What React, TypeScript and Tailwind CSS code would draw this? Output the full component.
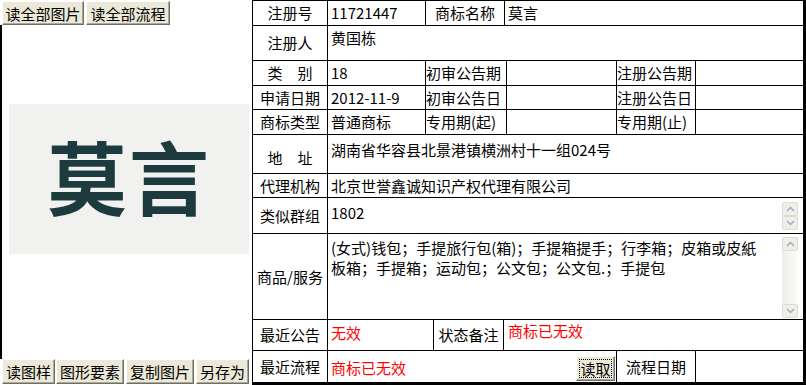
import React from 'react';

const FONT = "font-['Noto_Sans_CJK_SC',sans-serif]";

function Btn({ children, w, className = '' }: { children: React.ReactNode; w: string; className?: string }) {
  return (
    <button
      className={`${w} h-full shrink-0 bg-[#ece9d8] border border-t-white border-l-white border-r-[#716f64] border-b-[#716f64] shadow-[inset_-1px_-1px_0_#aca899] text-[15px] leading-none text-black ${className}`}
    >
      {children}
    </button>
  );
}

function Chevron({ up }: { up?: boolean }) {
  return (
    <svg width="9" height="6" viewBox="0 0 9 6" fill="none">
      <path d={up ? 'M1 5l3.5-3.5L8 5' : 'M1 1l3.5 3.5L8 1'} stroke="#a3abbc" strokeWidth="1.5" />
    </svg>
  );
}

function ScrollBar({ track }: { track?: boolean }) {
  return (
    <div className="w-[16px] h-full flex flex-col shrink-0">
      <div className="h-[14px] flex items-center justify-center bg-[#efeee9] border border-[#dddbd2] rounded-[2px]">
        <Chevron up />
      </div>
      <div className={track ? 'flex-1 bg-linear-to-r from-[#eeede6] to-[#fcfcf9]' : 'h-0'} />
      <div className="h-[14px] flex items-center justify-center bg-[#efeee9] border border-[#dddbd2] rounded-[2px]">
        <Chevron />
      </div>
    </div>
  );
}

const row = 'flex border-b border-black';
const label = 'shrink-0 w-[75px] border-r border-black flex items-center justify-center';
const cell = 'shrink-0 border-r border-black flex items-center pl-[3px]';

export default function App() {
  return (
    <div className={`w-[806px] h-[385px] flex bg-white text-[15px] leading-[16px] text-black ${FONT}`}>
      {/* left: picture panel */}
      <div className="w-[252px] h-full flex flex-col shrink-0">
        <div className="h-[25px] flex pl-[2px] pt-[1px] gap-[2px]">
          <Btn w="w-[82px]">读全部图片</Btn>
          <Btn w="w-[84px]">读全部流程</Btn>
        </div>
        <div className="flex-1 border-l-2 border-black flex flex-col justify-center pl-[7px] pr-[3px] pb-[27px]">
          <div className="h-[150px] bg-[#f1f1ef] flex items-center justify-center pb-[10px]">
            <span className="text-[80px] leading-none font-bold text-[#1d3b3f] tracking-[2px]">莫言</span>
          </div>
        </div>
        <div className="h-[26px] flex pl-[2px] pb-[1px]">
          <Btn w="w-[53px]">读图样</Btn>
          <Btn w="w-[68px]" className="ml-px">图形要素</Btn>
          <Btn w="w-[68px]" className="ml-[2px]">复制图片</Btn>
          <Btn w="w-[53px]" className="ml-[2px]">另存为</Btn>
        </div>
      </div>

      {/* right: detail table */}
      <div className="w-[554px] h-full flex flex-col border-l border-t border-black border-r-[3px] border-b-[3px]">
        <div className={`${row} h-[25px]`}>
          <div className={label}>注册号</div>
          <div className={`${cell} w-[98px]`}>11721447</div>
          <div className={`${label} !w-[79px]`}>商标名称</div>
          <div className="flex-1 flex items-center pl-[3px]">莫言</div>
        </div>
        <div className={`${row} h-[35px]`}>
          <div className={label}>注册人</div>
          <div className="flex-1 pl-[3px] pt-[4px]">黄国栋</div>
        </div>
        <div className={`${row} h-[25px]`}>
          <div className={label}>类　别</div>
          <div className={`${cell} w-[98px]`}>18</div>
          <div className={`${cell} w-[81px] !pl-0`}>初审公告期</div>
          <div className={`${cell} w-[110px]`} />
          <div className={`${cell} w-[79px] !pl-0`}>注册公告期</div>
          <div className="flex-1" />
        </div>
        <div className={`${row} h-[24px]`}>
          <div className={label}>申请日期</div>
          <div className={`${cell} w-[98px]`}>2012-11-9</div>
          <div className={`${cell} w-[81px] !pl-0`}>初审公告日</div>
          <div className={`${cell} w-[110px]`} />
          <div className={`${cell} w-[79px] !pl-0`}>注册公告日</div>
          <div className="flex-1" />
        </div>
        <div className={`${row} h-[25px]`}>
          <div className={label}>商标类型</div>
          <div className={`${cell} w-[98px]`}>普通商标</div>
          <div className={`${cell} w-[81px] !pl-0`}>专用期(起)</div>
          <div className={`${cell} w-[110px]`} />
          <div className={`${cell} w-[79px] !pl-0`}>专用期(止)</div>
          <div className="flex-1" />
        </div>
        <div className={`${row} h-[39px]`}>
          <div className={`${label} pt-[8px]`}>地　址</div>
          <div className="flex-1 pl-[3px] pt-[7px]">湖南省华容县北景港镇横洲村十一组024号</div>
        </div>
        <div className={`${row} h-[24px]`}>
          <div className={label}>代理机构</div>
          <div className="flex-1 flex items-center pl-[3px]">北京世誉鑫诚知识产权代理有限公司</div>
        </div>
        <div className={`${row} h-[36px]`}>
          <div className={label}>类似群组</div>
          <div className="flex-1 flex pl-[3px] pt-[4px] pb-[2px] pr-[5px]">
            <div className="flex-1 pt-[3px]">1802</div>
            <ScrollBar />
          </div>
        </div>
        <div className={`${row} h-[86px]`}>
          <div className={label}>商品/服务</div>
          <div className="flex-1 flex pl-[3px] pt-[3px] pb-[1px] pr-[5px]">
            <div className="flex-1 leading-[20px] pt-[1px]">
              (女式)钱包；手提旅行包(箱)；手提箱提手；行李箱；皮箱或皮紙
              <br />
              板箱；手提箱；运动包；公文包；公文包.；手提包
            </div>
            <ScrollBar track />
          </div>
        </div>
        <div className={`${row} h-[31px]`}>
          <div className={label}>最近公告</div>
          <div className={`${cell} w-[106px] !items-start pt-[5px] text-[#ff0000]`}>无效</div>
          <div className={`${label} !w-[70px]`}>状态备注</div>
          <div className="flex-1 pl-[4px] pt-[3px] text-[#ff0000]">商标已无效</div>
        </div>
        <div className="flex h-[31px]">
          <div className={label}>最近流程</div>
          <div className={`${cell} w-[289px] justify-between pr-[1px]`}>
            <span className="text-[#ff0000] pt-[2px]">商标已无效</span>
            <button className="w-[39px] h-[25px] mt-[4px] bg-[#ece9d8] border border-t-white border-l-white border-r-[#716f64] border-b-[#716f64] shadow-[inset_-1px_-1px_0_#aca899] p-[2px]">
              <span className="w-full h-full flex items-center justify-center outline-1 outline-dotted outline-black -outline-offset-1 text-[15px] leading-none">
                读取
              </span>
            </button>
          </div>
          <div className={`${label} !w-[79px]`}>流程日期</div>
          <div className="flex-1" />
        </div>
      </div>
    </div>
  );
}
